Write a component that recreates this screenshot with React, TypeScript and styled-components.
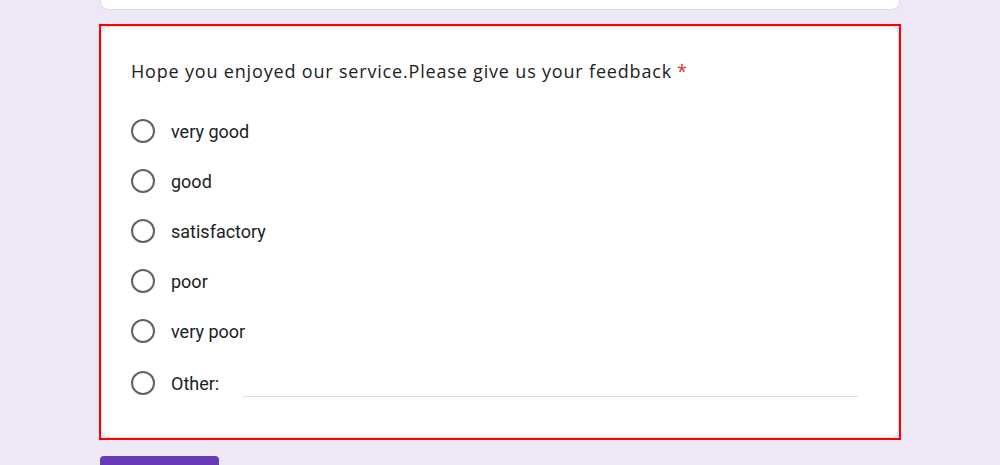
import React from "react";
import styled, { createGlobalStyle } from "styled-components";

const Global = createGlobalStyle`
  html, body { margin: 0; padding: 0; background: #ede7f6; }
  body { font-family: Roboto, "Liberation Sans", sans-serif; }
`;

const Page = styled.div`
  width: 802px;
  margin: 0 auto;
  display: flex;
  flex-direction: column;
`;

const PrevCard = styled.div`
  height: 9px;
  margin: 0 1px;
  background: #fff;
  border: 1px solid #dadce0;
  border-top: none;
  border-radius: 0 0 8px 8px;
`;

const Highlight = styled.div`
  margin-top: 14px;
  border: 2px solid #ff0000;
`;

const Card = styled.div`
  background: #fff;
  border: 1px solid #dadce0;
  border-radius: 8px;
  padding: 32px 40px 27px 29px;
  display: flex;
  flex-direction: column;
`;

const Title = styled.div`
  font-family: "Open Sans", Roboto, sans-serif;
  font-size: 18px;
  letter-spacing: 0.82px;
  line-height: 24px;
  color: #202124;
  margin-bottom: 23px;
`;

const Required = styled.span`
  color: #d93025;
  margin-left: 5px;
`;

const Option = styled.label<{ $tall?: boolean }>`
  display: flex;
  align-items: center;
  height: ${(p) => (p.$tall ? 54 : 50)}px;
  font-size: 18px;
  color: #202124;
`;

const Radio = styled.span`
  box-sizing: border-box;
  width: 24px;
  height: 24px;
  border: 2px solid #5f6368;
  border-radius: 50%;
  flex: none;
  margin-right: 16px;
`;

const OtherInput = styled.div`
  flex: 1;
  align-self: stretch;
  margin-left: 24px;
  border-bottom: 1px solid #dadce0;
  margin-bottom: 13px;
`;

const Footer = styled.div`
  margin-top: 16px;
  margin-left: 1px;
  display: flex;
`;

const SubmitButton = styled.div`
  width: 119px;
  height: 36px;
  background: #673ab7;
  border-radius: 4px;
`;

const options = ["very good", "good", "satisfactory", "poor", "very poor"];

export default function App() {
  return (
    <>
      <Global />
      <Page>
        <PrevCard />
        <Highlight>
          <Card>
            <Title>
              Hope you enjoyed our service.Please give us your feedback
              <Required>*</Required>
            </Title>
            {options.map((o) => (
              <Option key={o}>
                <Radio />
                {o}
              </Option>
            ))}
            <Option $tall>
              <Radio />
              Other:
              <OtherInput />
            </Option>
          </Card>
        </Highlight>
        <Footer>
          <SubmitButton />
        </Footer>
      </Page>
    </>
  );
}
